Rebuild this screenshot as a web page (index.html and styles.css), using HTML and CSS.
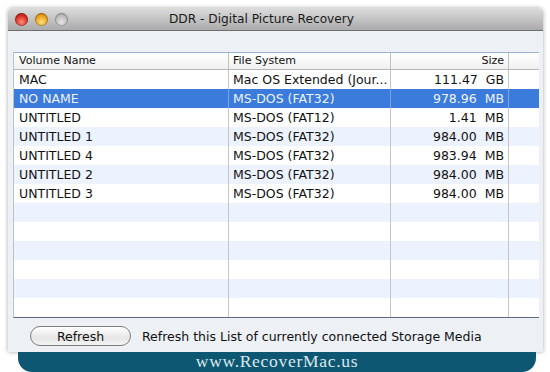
FILE: index.html
```html
<!DOCTYPE html>
<html>
<head>
<meta charset="utf-8">
<link rel="stylesheet" href="styles.css">
</head>
<body>
<div class="window">
  <div class="titlebar">
    <div class="lights">
      <span class="light red"></span>
      <span class="light yellow"></span>
      <span class="light gray"></span>
    </div>
    <div class="title">DDR - Digital Picture Recovery</div>
  </div>
  <div class="content">
    <div class="table">
      <div class="row head">
        <div class="c c1">Volume Name</div>
        <div class="c c2">File System</div>
        <div class="c c3">Size</div>
        <div class="c c4"></div>
      </div>
      <div class="row">
        <div class="c c1">MAC</div>
        <div class="c c2">Mac OS Extended (Jour...</div>
        <div class="c c3">111.47&nbsp;&nbsp;GB</div>
        <div class="c c4"></div>
      </div>
      <div class="row sel">
        <div class="c c1">NO NAME</div>
        <div class="c c2">MS-DOS (FAT32)</div>
        <div class="c c3">978.96&nbsp;&nbsp;MB</div>
        <div class="c c4"></div>
      </div>
      <div class="row">
        <div class="c c1">UNTITLED</div>
        <div class="c c2">MS-DOS (FAT12)</div>
        <div class="c c3">1.41&nbsp;&nbsp;MB</div>
        <div class="c c4"></div>
      </div>
      <div class="row alt">
        <div class="c c1">UNTITLED 1</div>
        <div class="c c2">MS-DOS (FAT32)</div>
        <div class="c c3">984.00&nbsp;&nbsp;MB</div>
        <div class="c c4"></div>
      </div>
      <div class="row">
        <div class="c c1">UNTITLED 4</div>
        <div class="c c2">MS-DOS (FAT32)</div>
        <div class="c c3">983.94&nbsp;&nbsp;MB</div>
        <div class="c c4"></div>
      </div>
      <div class="row alt">
        <div class="c c1">UNTITLED 2</div>
        <div class="c c2">MS-DOS (FAT32)</div>
        <div class="c c3">984.00&nbsp;&nbsp;MB</div>
        <div class="c c4"></div>
      </div>
      <div class="row">
        <div class="c c1">UNTITLED 3</div>
        <div class="c c2">MS-DOS (FAT32)</div>
        <div class="c c3">984.00&nbsp;&nbsp;MB</div>
        <div class="c c4"></div>
      </div>
      <div class="row alt"><div class="c c1"></div><div class="c c2"></div><div class="c c3"></div><div class="c c4"></div></div>
      <div class="row"><div class="c c1"></div><div class="c c2"></div><div class="c c3"></div><div class="c c4"></div></div>
      <div class="row alt"><div class="c c1"></div><div class="c c2"></div><div class="c c3"></div><div class="c c4"></div></div>
      <div class="row"><div class="c c1"></div><div class="c c2"></div><div class="c c3"></div><div class="c c4"></div></div>
      <div class="row alt"><div class="c c1"></div><div class="c c2"></div><div class="c c3"></div><div class="c c4"></div></div>
      <div class="row last"><div class="c c1"></div><div class="c c2"></div><div class="c c3"></div><div class="c c4"></div></div>
    </div>
    <div class="bottombar">
      <button class="btn">Refresh</button>
      <span class="hint">Refresh this List of currently connected Storage Media</span>
    </div>
  </div>
</div>
<div class="banner">www.RecoverMac.us</div>
</body>
</html>
```

FILE: styles.css
```css
html, body {
  margin: 0;
  padding: 0;
  background: #ffffff;
}
body {
  width: 550px;
  height: 372px;
  overflow: hidden;
  font-family: "DejaVu Sans", sans-serif;
  font-size: 12.5px;
  color: #111;
}
.window {
  margin: 8px 7px 0 8px;
  width: 535px;
  border-radius: 5px 5px 0 0;
  box-shadow: 0 0 4px rgba(0,0,0,0.35);
  overflow: hidden;
}
.titlebar {
  height: 22px;
  background: linear-gradient(#dcdcdc, #ababab);
  border-bottom: 1px solid #6f6f6f;
  display: flex;
  align-items: center;
  position: relative;
}
.lights {
  display: flex;
  gap: 7px;
  padding-left: 7px;
}
.light {
  width: 13px;
  height: 13px;
  border-radius: 50%;
  box-shadow: inset 0 0 0 1px rgba(0,0,0,0.25);
}
.red { background: radial-gradient(circle at 50% 70%, #ff8a7a, #d3281c 60%, #9a1a10); }
.yellow { background: radial-gradient(circle at 50% 70%, #ffe27a, #e59b17 60%, #a86a08); }
.gray { background: radial-gradient(circle at 50% 70%, #e4e4e4, #b9b9b9 60%, #9a9a9a); }
.title {
  position: absolute;
  left: 0;
  right: 28px;
  text-align: center;
  font-size: 12.2px;
  color: #1a1a1a;
  pointer-events: none;
}
.content {
  background: #edf0f5;
  padding: 21px 4px 0 5px;
}
.table {
  background: #fff;
  border-top: 1px solid #9bb3d6;
  border-left: 1px solid #b8c2d0;
  border-bottom: 1px solid #5a6a7c;
}
.row {
  display: flex;
  height: 19px;
  line-height: 19px;
}
.row.head {
  height: 16px;
  line-height: 16px;
  font-size: 11px;
  background: linear-gradient(#ffffff, #f0f0f0);
  border-bottom: 1px solid #b7b7b7;
}
.row.alt { background: #edf3fe; }
.row.sel { background: #3a7bdb; color: #eef4ff; }
.c {
  box-sizing: border-box;
  padding-left: 5px;
  white-space: nowrap;
  overflow: hidden;
  border-right: 1px solid #c6c6c6;
}
.c1 { width: 215px; }
.c2 { width: 162px; padding-left: 4px; }
.c3 { width: 118px; text-align: right; padding-right: 4px; }
.c4 { flex: 1; border-right: none; }
.row.head .c { border-right-color: #c0c0c0; }
.row.sel .c { border-right-color: #7aa4e6; }
.bottombar {
  height: 34px;
  box-sizing: border-box;
  padding-top: 2px;
  display: flex;
  align-items: center;
  padding-left: 17px;
}
.btn {
  width: 101px;
  height: 20px;
  border-radius: 10px;
  border: 1px solid #7d7d7d;
  background: linear-gradient(#ffffff, #e6e6e6 60%, #f3f3f3);
  font-family: "DejaVu Sans", sans-serif;
  font-size: 12.5px;
  color: #111;
  padding: 0;
  margin-right: 11px;
}
.hint {
  font-size: 12.5px;
}
.banner {
  margin: 0 14px 0 18px;
  height: 20px;
  background: #0e5773;
  border-radius: 0 0 14px 14px;
  color: #dce7ed;
  font-family: "Liberation Serif", serif;
  font-size: 17.5px;
  letter-spacing: 0.7px;
  text-align: center;
  line-height: 19px;
}
```
